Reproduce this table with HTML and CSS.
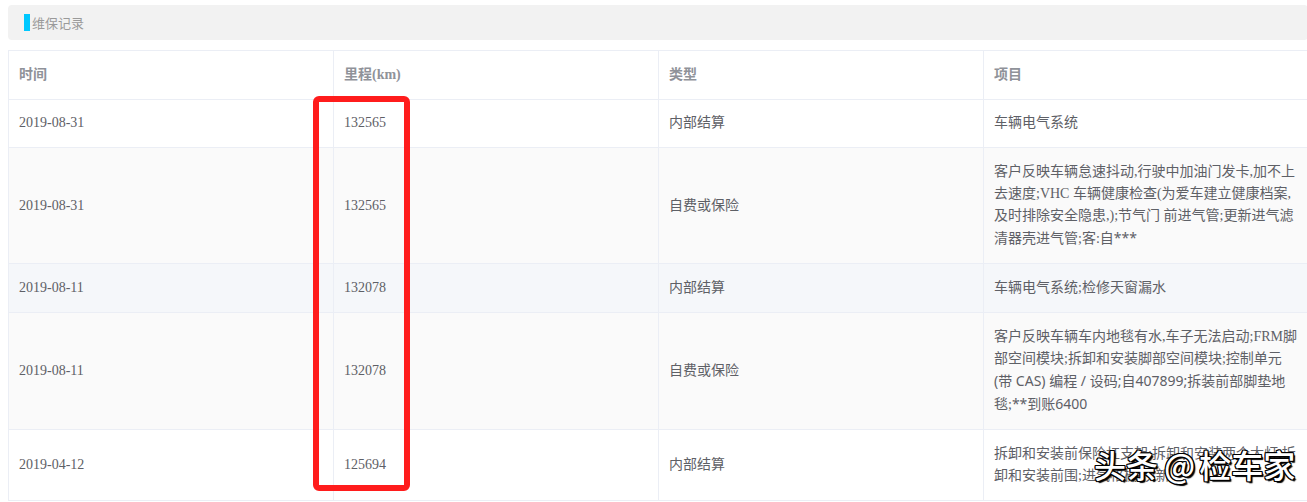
FILE: index.html
```html
<!DOCTYPE html>
<html lang="zh-CN">
<head>
<meta charset="utf-8">
<title>维保记录</title>
<link rel="stylesheet" href="styles.css">
</head>
<body>
<div class="page">
  <div class="section-title"><span class="mark"></span>维保记录</div>
  <table class="records">
    <colgroup><col class="c"><col class="c"><col class="c"><col class="c"></colgroup>
    <thead>
      <tr><th>时间</th><th>里程(km)</th><th>类型</th><th>项目</th></tr>
    </thead>
    <tbody>
      <tr><td>2019-08-31</td><td>132565</td><td>内部结算</td><td>车辆电气系统</td></tr>
      <tr class="stripe"><td>2019-08-31</td><td>132565</td><td>自费或保险</td><td>客户反映车辆怠速抖动,行驶中加油门发卡,加不上<br>去速度;VHC 车辆健康检查(为爱车建立健康档案,<br>及时排除安全隐患,);节气门 前进气管;更新进气滤<br>清器壳进气管;客:自<span class="alt">***</span></td></tr>
      <tr class="hover"><td>2019-08-11</td><td>132078</td><td>内部结算</td><td>车辆电气系统;检修天窗漏水</td></tr>
      <tr class="stripe"><td>2019-08-11</td><td>132078</td><td>自费或保险</td><td>客户反映车辆车内地毯有水,车子无法启动;FRM脚<br>部空间模块;拆卸和安装脚部空间模块;控制单元<br><span class="alt">(带 CAS) 编程 / 设码;自407899;</span>拆装前部脚垫地<br>毯;<span class="alt">**到账6400</span></td></tr>
      <tr><td>2019-04-12</td><td>125694</td><td>内部结算</td><td>拆卸和安装前保险杠支架;拆卸和安装两个大灯;拆<br>卸和安装前围;进气格栅;换新</td></tr>
    </tbody>
  </table>
  <div class="highlight"></div>
  <div class="watermark">头条<span class="at">@</span>检车家</div>
</div>
</body>
</html>
```
FILE: styles.css
```css
html, body {
  margin: 0;
  padding: 0;
  background: #ffffff;
  overflow: hidden;
}

.page {
  position: relative;
  width: 1300px;
  margin-left: 8px;
  padding-top: 5px;
  font-family: "Liberation Serif", "Noto Sans CJK SC", serif;
}

.section-title {
  height: 35px;
  background: #f2f2f2;
  border-radius: 4px;
  display: flex;
  align-items: center;
  padding-left: 16px;
  font-family: "Noto Sans CJK SC", sans-serif;
  font-size: 13px;
  color: #9a9a9a;
}

.mark {
  width: 6px;
  height: 17px;
  background: #00c8ff;
  margin-right: 2px;
}

.records {
  margin-top: 10px;
  width: 1300px;
  table-layout: fixed;
  border-collapse: collapse;
  border: 1px solid #ebeef5;
  font-size: 14px;
  color: #5e6066;
}

.records col.c {
  width: 325px;
}

.records th,
.records td {
  border: 1px solid #ebeef5;
  padding: 12.7px 8px 12.7px 10px;
  line-height: 22.2px;
  text-align: left;
  vertical-align: middle;
  white-space: nowrap;
}

.records th {
  font-weight: bold;
  color: #8f9299;
}

.records tr.stripe td {
  background: #fafafa;
}

.records tr.hover td {
  background: #f5f7fa;
}

.alt {
  font-family: "Noto Sans", "Noto Sans CJK SC", sans-serif;
}

.highlight {
  position: absolute;
  left: 305px;
  top: 96px;
  width: 97px;
  height: 395px;
  box-sizing: border-box;
  border: 6px solid #ff1c1c;
  border-radius: 6px;
}

.watermark {
  position: absolute;
  left: 1086px;
  top: 441px;
  font-family: "Noto Sans CJK SC", sans-serif;
  font-size: 32px;
  font-weight: 500;
  line-height: 46px;
  color: #ffffff;
  white-space: nowrap;
  text-shadow:
    -1px -1px 0 #000, 1px -1px 0 #000, -1px 1px 0 #000, 1px 1px 0 #000,
    0 1px 0 #000, 0 -1px 0 #000, 1px 0 0 #000, -1px 0 0 #000,
    2px 2px 1px #000;
}

.watermark .at {
  margin: 0 4px 0 6px;
}
```
